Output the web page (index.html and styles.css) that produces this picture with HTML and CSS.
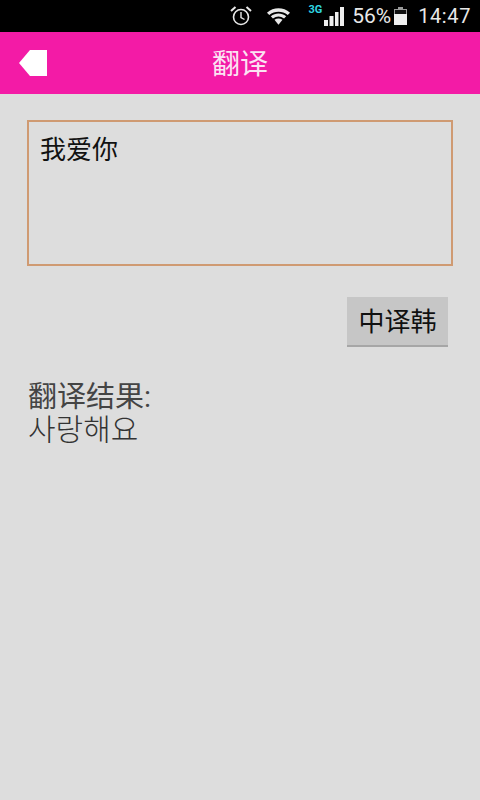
FILE: index.html
```html
<!DOCTYPE html>
<html>
<head>
	<meta charset="utf-8">
	<title>翻译</title>
	<link rel="stylesheet" href="styles.css">
</head>
<body>
	<div class="statusbar">
		<svg class="alarm" width="22" height="22" viewBox="0 0 22 22">
			<circle cx="11" cy="12" r="7.5" fill="none" stroke="#e8e8e8" stroke-width="1.6"/>
			<path d="M11 7V12.5L14.5 14.5" fill="none" stroke="#e8e8e8" stroke-width="1.4"/>
			<path d="M1 6L5.5 2M21 6L16.5 2" stroke="#e8e8e8" stroke-width="2"/>
		</svg>
		<svg class="wifi" width="25" height="20" viewBox="0 0 26 20">
			<path d="M1 6.5C8 0.5 18 0.5 25 6.5L22.6 9C17 4.5 9 4.5 3.4 9Z" fill="#e8e8e8"/>
			<path d="M5 10.3C10 6.3 16 6.3 21 10.3L18.8 12.6C15 9.8 11 9.8 7.2 12.6Z" fill="#e8e8e8"/>
			<path d="M8.8 14C11.5 12.2 14.5 12.2 17.2 14L13 19Z" fill="#e8e8e8"/>
		</svg>
		<div class="signal">
			<span class="net">3G</span>
			<svg width="20" height="19" viewBox="0 0 20 19">
				<path d="M0 13H4V19H0ZM5.5 9H9.5V19H5.5ZM11 5H14.5V19H11ZM16 0H20V19H16Z" fill="#eeeeee"/>
			</svg>
		</div>
		<span class="percent">56%</span>
		<svg class="battery" width="13" height="18" viewBox="0 0 13 18">
			<path d="M4 0H9V2H13V18H0V2H4Z" fill="#999"/>
			<path d="M1 3H12V7H1Z" fill="#111"/>
			<path d="M0 7H13V18H0Z" fill="#f0f0f0"/>
		</svg>
		<span class="clock">14:47</span>
	</div>

	<div class="titlebar">
		<svg class="back" width="28" height="26" viewBox="0 0 28 26">
			<path d="M0 13L11 0H28V26H11Z" fill="#fff"/>
		</svg>
		<span class="title">翻译</span>
	</div>

	<div class="content">
		<div class="inputbox">我爱你</div>
		<div class="actions">
			<div class="btn">中译韩</div>
		</div>
		<div class="result">
			<div class="result-label">翻译结果:</div>
			<div lang="ko" class="korean">사랑해요</div>
		</div>
	</div>
</body>
</html>
```

FILE: styles.css
```css
html, body{
	height: 100%;
}
body{
	margin: 0;
	padding: 0;
	background: #dddddd;
	font-family: "Roboto", "Noto Sans CJK SC", sans-serif;
	overflow: hidden;
}

.statusbar{
	height: 32px;
	background: #000;
	color: #e8e8e8;
	display: flex;
	align-items: center;
	justify-content: flex-end;
	padding-right: 9px;
	box-sizing: border-box;
}
.alarm{
	margin-right: 14px;
}
.wifi{
	margin-right: 17px;
}
.signal{
	display: flex;
	align-items: flex-end;
	margin-right: 8px;
}
.signal svg{
	margin-left: 2px;
}
.net{
	color: #2fd6e0;
	font-size: 11px;
	font-weight: bold;
	line-height: 10px;
	align-self: flex-start;
	margin-top: -2px;
}
.percent{
	font-size: 21px;
	margin-right: 3px;
}
.battery{
	margin-right: 11px;
}
.clock{
	font-size: 20px;
	letter-spacing: 0.6px;
}

.titlebar{
	height: 62px;
	background: #f31ba6;
	display: flex;
	align-items: center;
	justify-content: center;
	position: relative;
}
.back{
	position: absolute;
	left: 19px;
	top: 18px;
}
.title{
	color: #fbe3f3;
	font-size: 28px;
	margin-top: -2px;
}

.content{
	padding: 26px 27px 0 27px;
}
.inputbox{
	height: 146px;
	box-sizing: border-box;
	border: 2px solid #cf9a72;
	padding: 10px 11px;
	font-size: 26px;
	line-height: 36px;
	color: #111;
}
.actions{
	display: flex;
	justify-content: flex-end;
	margin-top: 31px;
	padding-right: 5px;
}
.btn{
	width: 101px;
	height: 50px;
	box-sizing: border-box;
	background: #c6c6c6;
	border-bottom: 2px solid #a6a6a6;
	text-align: center;
	font-size: 26px;
	line-height: 50px;
	color: #111;
}
.result{
	margin-top: 34px;
	padding-left: 1px;
	color: #444;
	line-height: 33px;
}
.result-label{
	font-size: 29px;
}
.korean{
	font-family: "Roboto", "Noto Sans CJK KR", sans-serif;
	font-size: 30px;
	font-weight: 300;
	color: #333;
	margin-top: -1px;
}
```
